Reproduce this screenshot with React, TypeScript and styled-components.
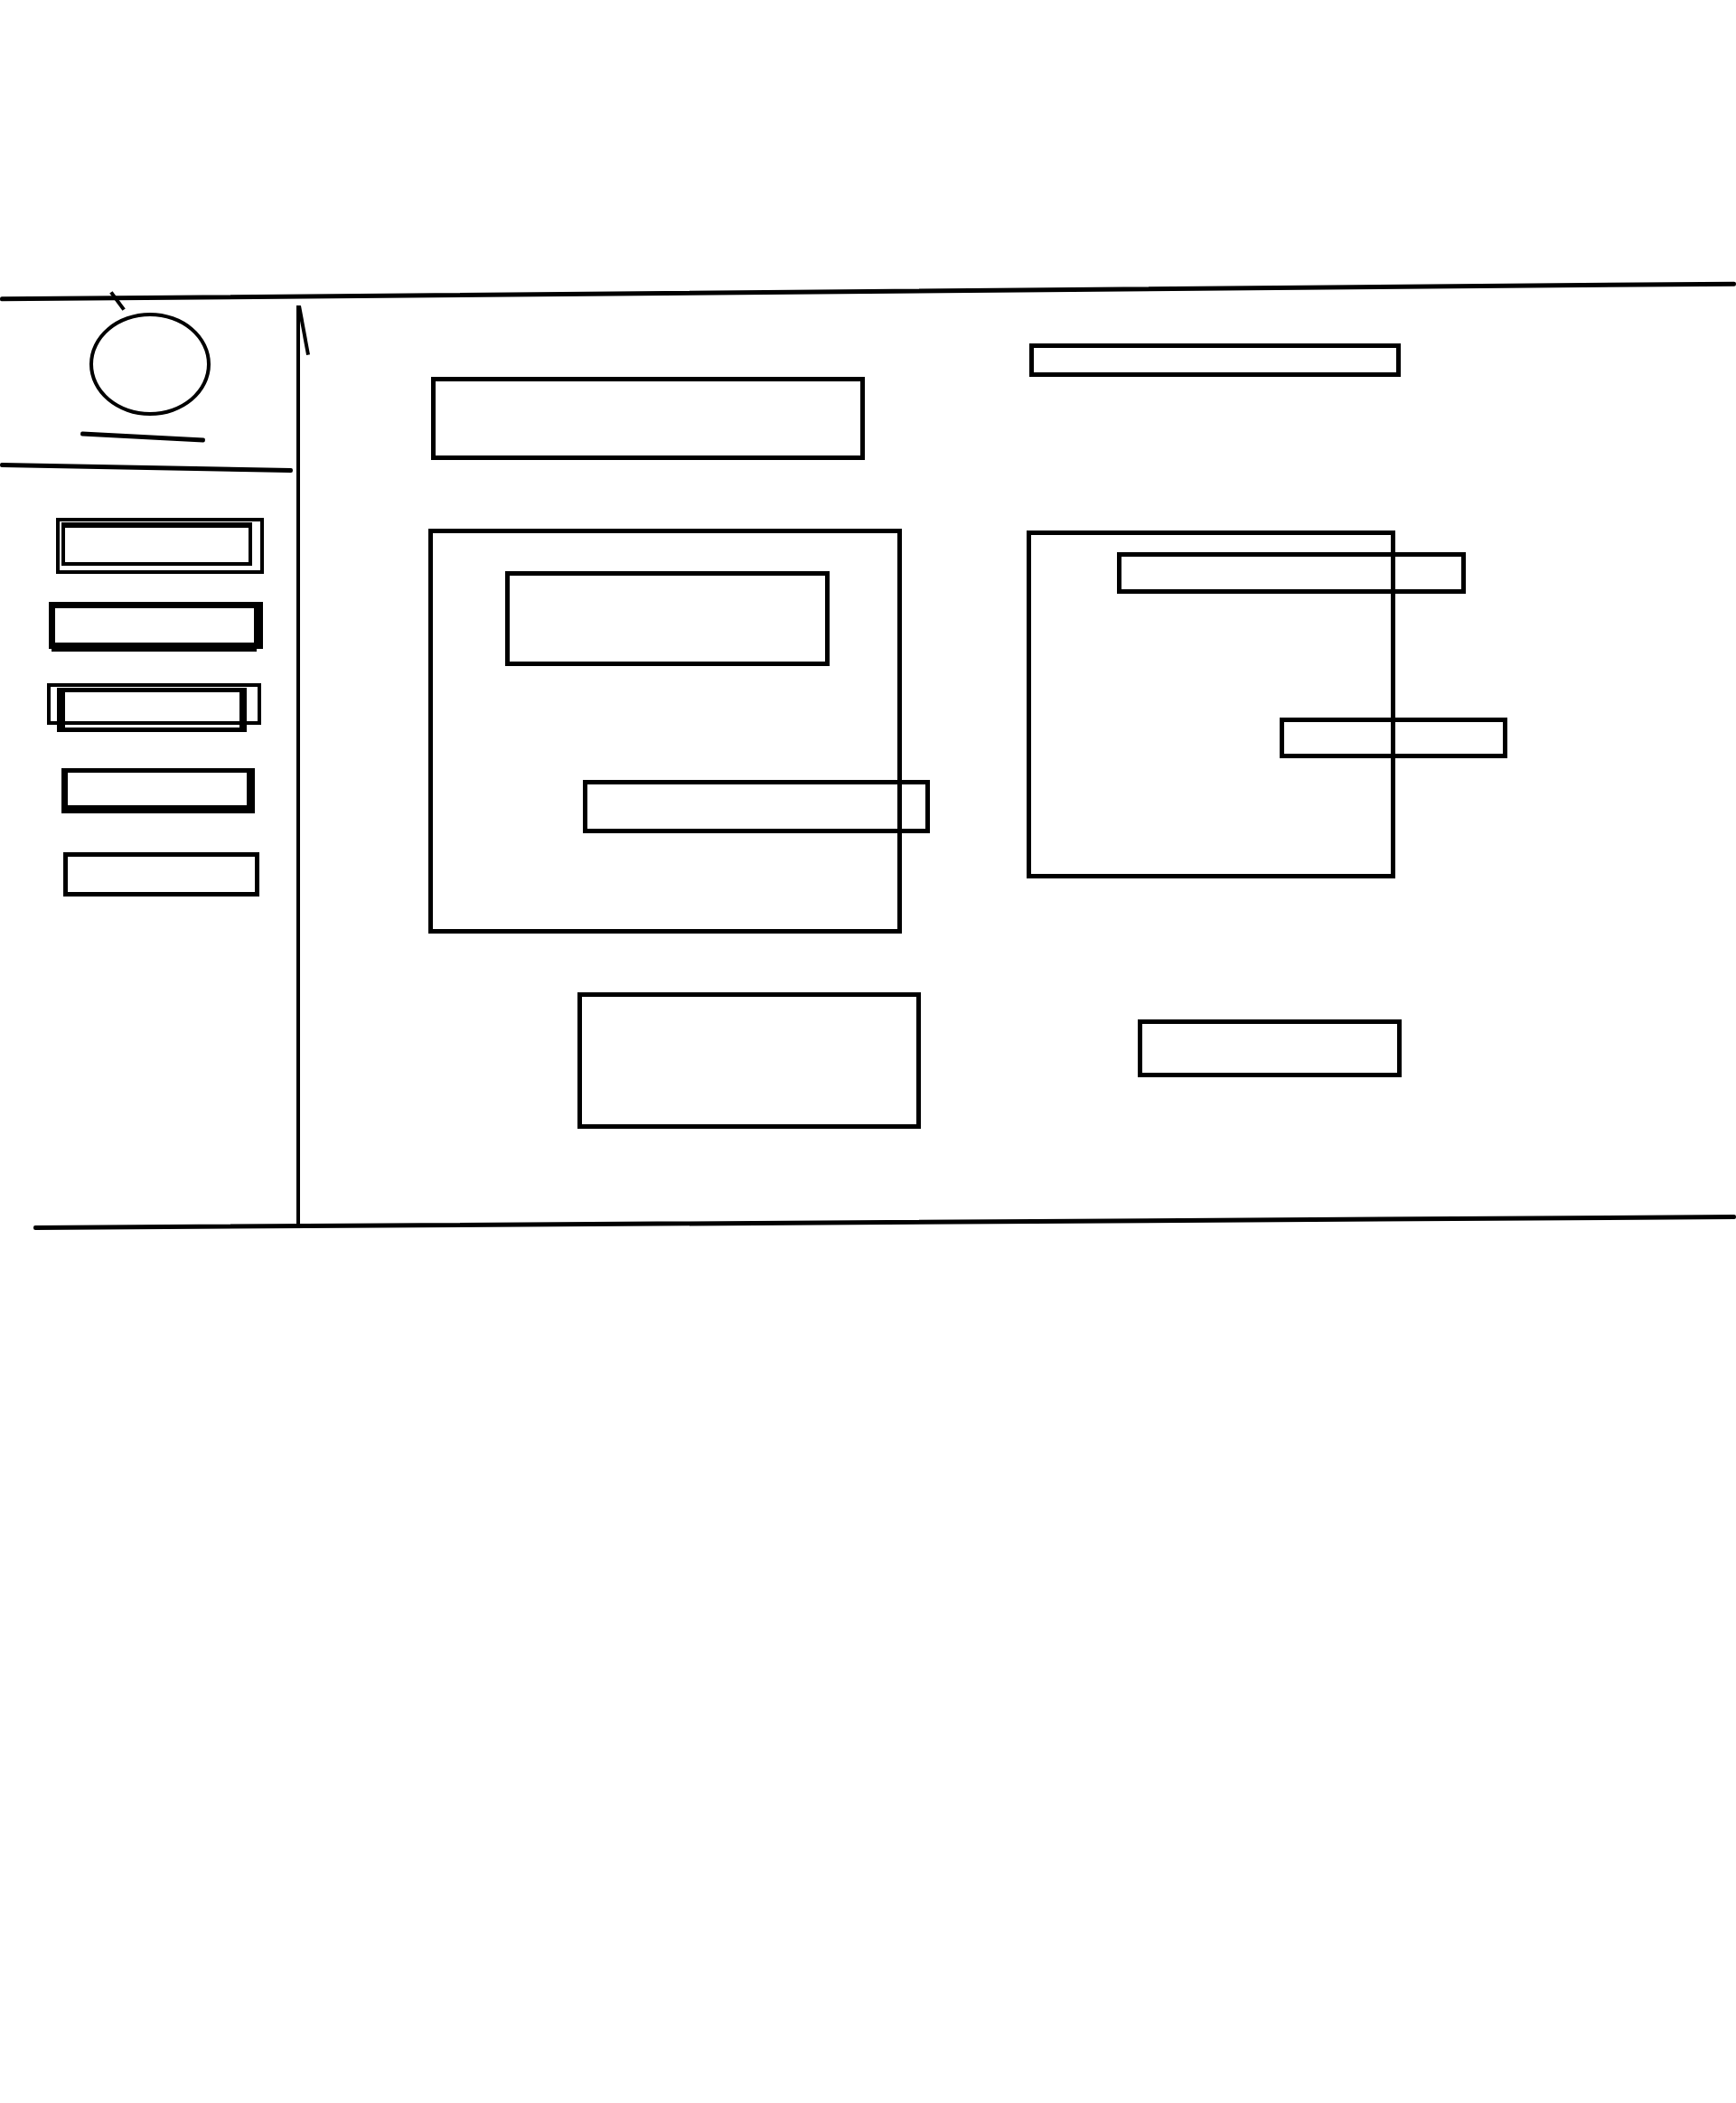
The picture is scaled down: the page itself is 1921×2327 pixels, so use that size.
import styled, { createGlobalStyle, css } from "styled-components"

const GlobalStyle = createGlobalStyle`
  html, body {
    margin: 0;
    padding: 0;
    background: #fff;
    overflow: hidden;
  }
  body {
    font-family: "Liberation Sans", Arial, sans-serif;
  }
`

// a pen stroke: straight bar, slightly tilted like the hand drawing
type StrokeProps = { $w: number; $h?: number; $ml?: number; $mt?: number; $angle?: number }

const Stroke = styled.div<StrokeProps>`
  flex-shrink: 0;
  width: ${p => p.$w}px;
  height: ${p => p.$h ?? 5}px;
  margin-left: ${p => p.$ml ?? 0}px;
  margin-top: ${p => p.$mt ?? 0}px;
  background: #000;
  border-radius: 2px;
  transform: rotate(${p => p.$angle ?? 0}deg);
`

type BoxProps = { $w: number; $h: number; $ml?: number; $mt?: number }

const outlined = css<BoxProps>`
  box-sizing: border-box;
  flex-shrink: 0;
  width: ${p => p.$w}px;
  height: ${p => p.$h}px;
  margin-left: ${p => p.$ml ?? 0}px;
  margin-top: ${p => p.$mt ?? 0}px;
  border: 5px solid #000;
`

const Page = styled.div`
  width: 1921px;
  height: 2327px;
  padding-top: 320px;
  box-sizing: border-box;
`

const Frame = styled.div`
  display: flex;
  flex-direction: column;
`

const Body = styled.div`
  display: flex;
  height: 1025px;
`

/* ---------- sidebar ---------- */

const Sidebar = styled.aside`
  width: 328px;
  flex-shrink: 0;
  display: flex;
  flex-direction: column;
`

const Profile = styled.div`
  position: relative;
  display: flex;
  flex-direction: column;
`

const Avatar = styled.div`
  box-sizing: border-box;
  width: 134px;
  height: 114px;
  margin: 21px 0 0 99px;
  border: 4px solid #000;
  border-radius: 50%;
`

const PenMark = styled.div`
  position: absolute;
  left: 118px;
  top: 6px;
  width: 24px;
  height: 4px;
  background: #000;
  transform: rotate(53.6deg);
`

const Nav = styled.nav`
  display: flex;
  flex-direction: column;
`

type Echo = { top: number; right: number; bottom: number; left: number; border: string }

const NavItem = styled.div<BoxProps & { $border: string; $echo?: Echo }>`
  ${outlined}
  position: relative;
  border-width: ${p => p.$border};
  ${p =>
    p.$echo &&
    css`
      &::after {
        content: "";
        position: absolute;
        top: ${p.$echo.top}px;
        right: ${p.$echo.right}px;
        bottom: ${p.$echo.bottom}px;
        left: ${p.$echo.left}px;
        border: solid #000;
        border-width: ${p.$echo.border};
      }
    `}
`

type NavBox = { mt: number; ml: number; w: number; h: number; border: string; echo?: Echo }

const navItems: NavBox[] = [
  { mt: 53, ml: 62, w: 230, h: 62, border: "4px", echo: { top: 1, right: 9, bottom: 5, left: 2, border: "6px 4px 4px 4px" } },
  { mt: 31, ml: 54, w: 237, h: 52, border: "7px 9px 7px 7px", echo: { top: -4, right: -2, bottom: -10, left: -4, border: "3px" } },
  { mt: 38, ml: 52, w: 237, h: 46, border: "4px", echo: { top: 1, right: 12, bottom: -12, left: 7, border: "5px 8px 5px 9px" } },
  { mt: 48, ml: 68, w: 214, h: 50, border: "5px 9px 9px 7px" },
  { mt: 43, ml: 70, w: 217, h: 49, border: "5px" },
]

const Divider = styled.div`
  position: relative;
  width: 4px;
  flex-shrink: 0;
  margin: 13px 0 -6px;
  background: #000;
`

const DividerMark = styled.div`
  position: absolute;
  left: 6px;
  top: 0;
  width: 4px;
  height: 55px;
  background: #000;
  transform: rotate(-10.5deg);
`

/* ---------- main ---------- */

const Main = styled.main`
  flex: 1;
  display: grid;
  grid-template-columns: 662px 1fr;
  padding-left: 142px;
`

const Column = styled.div`
  display: flex;
  flex-direction: column;
  align-items: flex-start;
`

const Heading = styled.div<BoxProps>`
  ${outlined}
`

const Card = styled.div<BoxProps>`
  ${outlined}
  display: flex;
  flex-direction: column;
  align-items: flex-start;
`

const CardMedia = styled.div<BoxProps>`
  ${outlined}
`

const CardBar = styled.div<BoxProps>`
  ${outlined}
`

const Action = styled.div<BoxProps>`
  ${outlined}
`

export default function App() {
  return (
    <>
      <GlobalStyle />
      <Page>
        <Frame>
          <Stroke $w={1921} $angle={-0.5} />
          <Body>
            <Sidebar>
              <Profile>
                <PenMark />
                <Avatar />
                <Stroke $w={138} $ml={89} $mt={21} $angle={2.9} />
                <Stroke $w={324} $mt={29} $angle={1.06} />
              </Profile>
              <Nav>
                {navItems.map((item, i) => (
                  <NavItem
                    key={i}
                    $w={item.w}
                    $h={item.h}
                    $ml={item.ml}
                    $mt={item.mt}
                    $border={item.border}
                    $echo={item.echo}
                  />
                ))}
              </Nav>
            </Sidebar>
            <Divider>
              <DividerMark />
            </Divider>
            <Main>
              <Column>
                <Heading $w={480} $h={92} $ml={3} $mt={92} />
                <Card $w={524} $h={448} $mt={76}>
                  <CardMedia $w={359} $h={105} $ml={80} $mt={42} />
                  <CardBar $w={384} $h={59} $ml={166} $mt={126} />
                </Card>
                <Action $w={380} $h={151} $ml={165} $mt={65} />
              </Column>
              <Column>
                <Heading $w={411} $h={37} $ml={3} $mt={55} />
                <Card $w={408} $h={385} $mt={170}>
                  <CardBar $w={386} $h={46} $ml={95} $mt={19} />
                  <CardBar $w={252} $h={45} $ml={275} $mt={137} />
                </Card>
                <Action $w={292} $h={64} $ml={123} $mt={156} />
              </Column>
            </Main>
          </Body>
          <Stroke $w={1884} $ml={37} $angle={-0.365} />
        </Frame>
      </Page>
    </>
  )
}
